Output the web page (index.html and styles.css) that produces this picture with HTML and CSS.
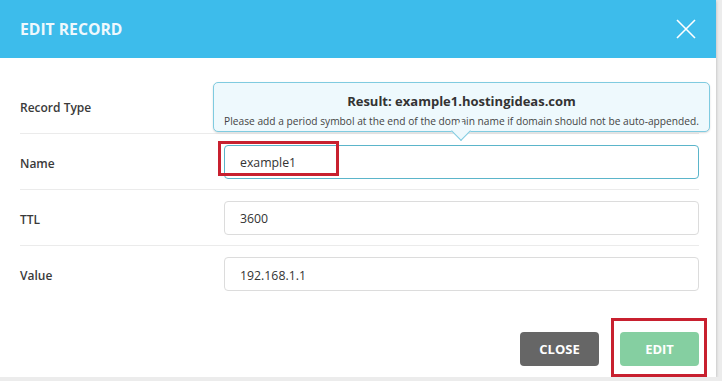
FILE: index.html
```html
<!DOCTYPE html>
<html lang="en">
<head>
    <meta charset="UTF-8">
    <title>Edit Record</title>
    <link rel="stylesheet" href="styles.css">
</head>
<body>
    <div class="modal">
        <div class="modal-header">
            <h2>EDIT RECORD</h2>
            <span class="close-x">
                <svg width="22" height="22" viewBox="0 0 22 22"><path d="M2 2L20 20M20 2L2 20" stroke="#fff" stroke-width="1.6" fill="none"/></svg>
            </span>
        </div>
        <div class="modal-body">
            <div class="row">
                <label>Record Type</label>
                <div class="field">
                    <div class="tip">
                        <div class="tip-title">Result: example1.hostingideas.com</div>
                        <div class="tip-text">Please add a period symbol at the end of the domain name if domain should not be auto-appended.</div>
                    </div>
                </div>
            </div>
            <div class="row">
                <label for="name">Name</label>
                <div class="field">
                    <input type="text" id="name" class="focused" value="example1">
                    <span class="mark mark-name"></span>
                </div>
            </div>
            <div class="row">
                <label for="ttl">TTL</label>
                <div class="field"><input type="text" id="ttl" value="3600"></div>
            </div>
            <div class="row last">
                <label for="value">Value</label>
                <div class="field"><input type="text" id="value" value="192.168.1.1"></div>
            </div>
        </div>
        <div class="modal-footer">
            <button class="btn btn-close">CLOSE</button>
            <div class="btn-wrap">
                <button class="btn btn-edit">EDIT</button>
                <span class="mark mark-edit"></span>
            </div>
        </div>
    </div>
</body>
</html>
```

FILE: styles.css
```css
body {
    margin: 0;
    background-color: #ececec;
    font-family: 'Open Sans', sans-serif;
    color: #333;
}
.modal {
    width: 716px;
    height: 377px;
    background: white;
    box-shadow: 0 1px 3px rgba(0, 0, 0, 0.25);
}
.modal-header {
    height: 58px;
    background-color: #3dbceb;
    display: flex;
    align-items: center;
    justify-content: space-between;
    padding: 0 19px 0 20px;
}
.modal-header h2 {
    margin: 0;
    font-size: 15.7px;
    font-weight: 700;
    color: #eef8fd;
}
.close-x {
    display: flex;
}
.modal-body {
    padding: 20px 17px 0 20px;
}
.row {
    height: 56px;
    display: flex;
    align-items: center;
    border-bottom: 1px solid #ebebeb;
    box-sizing: border-box;
}
.row.last {
    border-bottom: none;
}
.row label {
    width: 204px;
    padding-top: 3px;
    font-size: 12px;
    font-weight: 600;
    color: #3a3a3a;
}
.field {
    flex: 1;
    position: relative;
    height: 34px;
}
input {
    width: 100%;
    height: 34px;
    box-sizing: border-box;
    border: 1px solid #dcdcdc;
    border-radius: 4px;
    padding: 2px 15px 0;
    font-family: 'Open Sans', sans-serif;
    font-size: 12.3px;
    color: #333;
}
input.focused {
    border-color: #5bb5ca;
}
.tip {
    position: absolute;
    left: -11px;
    right: -11px;
    top: -7px;
    height: 50px;
    box-sizing: border-box;
    background: #eef9fd;
    border: 1px solid #7fcbe0;
    border-radius: 5px;
    box-shadow: 0 1px 2px rgba(0, 0, 0, 0.15);
    text-align: center;
    padding-top: 9px;
    z-index: 2;
}
.tip::after {
    content: '';
    position: absolute;
    left: 240px;
    bottom: -10px;
    width: 13px;
    height: 13px;
    background: #eef9fd;
    border-right: 1px solid #7fcbe0;
    border-bottom: 1px solid #7fcbe0;
    transform: rotate(45deg);
    margin-bottom: 3px;
}
.tip-title {
    font-size: 13px;
    font-weight: 700;
    color: #333;
}
.tip-text {
    font-size: 10.2px;
    color: #444;
    margin-top: 4px;
}
.mark {
    position: absolute;
    border: 3px solid #c8202f;
    box-sizing: border-box;
}
.mark-name {
    left: -6px;
    top: -4px;
    width: 121px;
    height: 35px;
}
.modal-footer {
    display: flex;
    justify-content: flex-end;
    gap: 21px;
    padding: 30px 17px 0 0;
}
.btn-wrap {
    position: relative;
}
.btn {
    width: 79px;
    height: 34px;
    border: none;
    border-radius: 4px;
    color: white;
    font-family: 'Open Sans', sans-serif;
    font-size: 13px;
    font-weight: 700;
}
.btn-close {
    background-color: #666;
}
.btn-edit {
    background-color: #85cfa1;
}
.mark-edit {
    left: -9px;
    top: -14px;
    width: 96px;
    height: 59px;
}
```
